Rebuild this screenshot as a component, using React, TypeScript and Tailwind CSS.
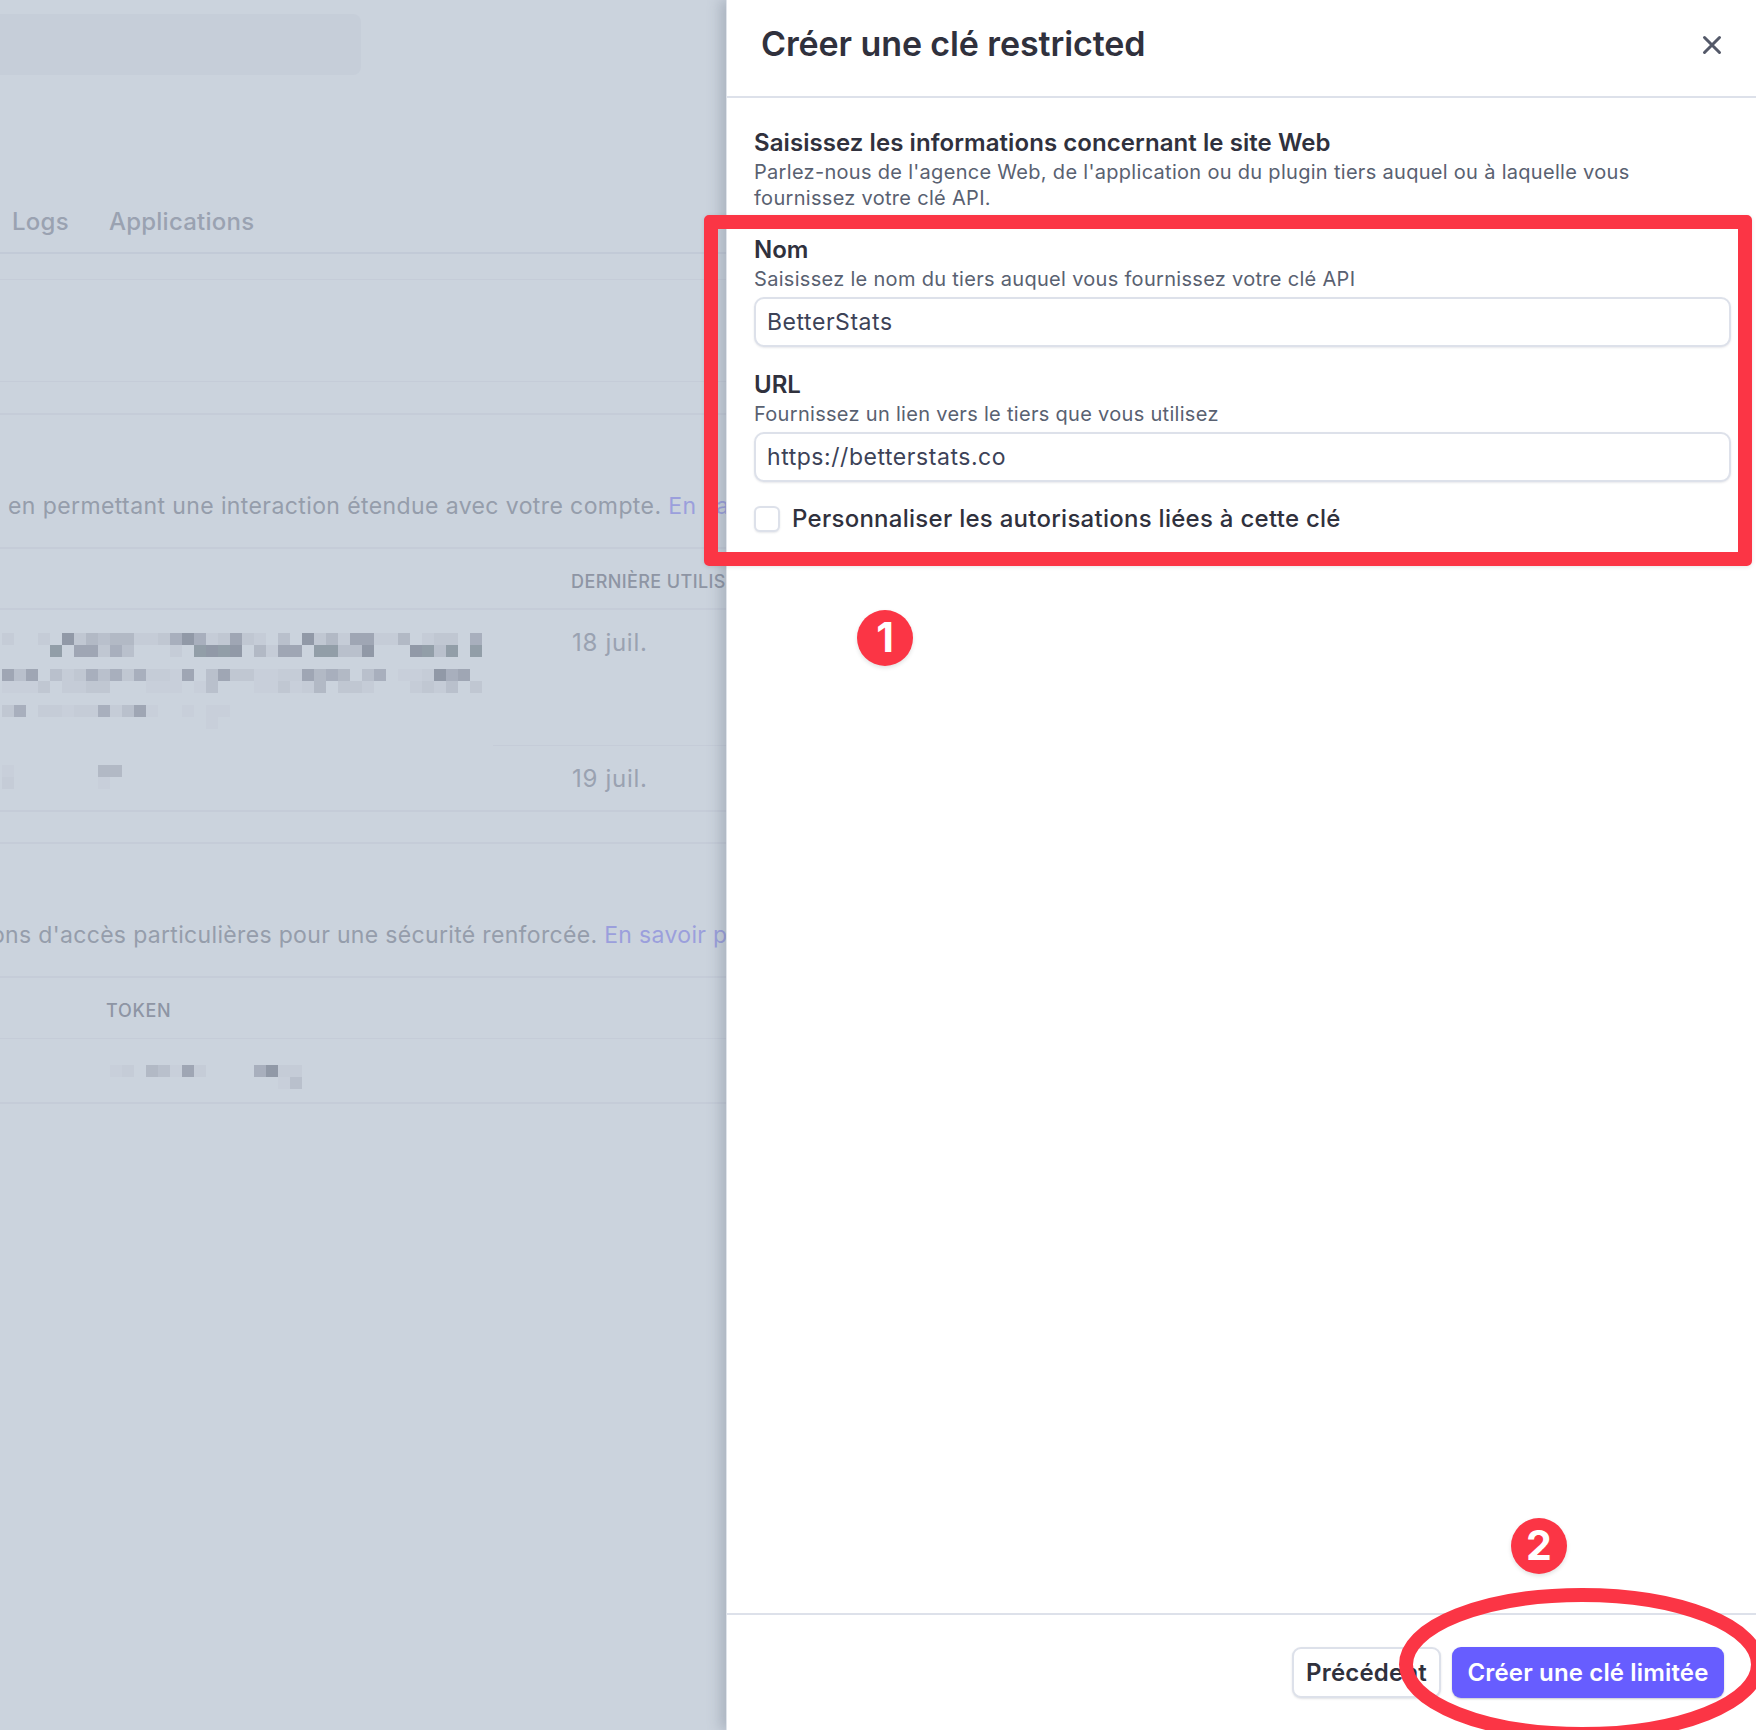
import React from "react";

const shades: Record<string, string> = {
  ".": "",
  "0": "bg-[#c8cfda]",
  "1": "bg-[#c5ccd7]",
  "2": "bg-[#c0c7d2]",
  "3": "bg-[#b9c0cc]",
  "4": "bg-[#b2b9c5]",
  "5": "bg-[#a8afbd]",
  "6": "bg-[#9fa6b4]",
  "7": "bg-[#9199a7]",
  "8": "bg-[#929ea8]",
};

const keyRows = [
  "1..1.72434411257512621.3.724166114.122.5",
  "....8.66253...1.8787.4166.88337...7838.8",
  "",
  "636.312535251106.362200116454.35.001756.",
  "0002.1122...000.03...002014.221...1213.2",
  "",
  "25.1101151360..0.00",
  ".................0",
];

const Mosaic: React.FC<{ rows: string[] }> = ({ rows }) => (
  <div className="grid grid-cols-[repeat(40,12px)] auto-rows-[12px] ml-[2px]">
    {rows.map((row, r) =>
      row
        .padEnd(40, ".")
        .split("")
        .map((c, i) => <span key={`${r}-${i}`} className={shades[c]} />)
    )}
  </div>
);

const Field: React.FC<{ label: string; hint: string; value: string }> = ({ label, hint, value }) => (
  <div className="flex flex-col">
    <label className="text-[24px] leading-[28px] font-semibold text-[#30313d]">{label}</label>
    <span className="text-[20px] leading-[26px] tracking-[0.3px] text-[#596171] mt-[2px]">{hint}</span>
    <input
      readOnly
      value={value}
      className="mt-[5px] h-[50px] w-full rounded-[10px] border-2 border-[#dde1ea] bg-white px-[11px] text-[23px] tracking-[0.55px] text-[#3c4257] outline-none shadow-[0_1px_2px_rgba(60,66,87,0.12)]"
    />
  </div>
);

export default function App() {
  return (
    <div className="relative flex h-[1730px] w-[1756px] overflow-hidden bg-[#cbd3dd] font-['Inter',sans-serif]">
      {/* page behind the drawer */}
      <div className="w-[726px] shrink-0 overflow-hidden text-[#959dab]">
        <div className="h-[254px] border-b-2 border-[#c2cad7] flex flex-col">
          <div className="mt-[14px] h-[61px] w-[361px] rounded-r-[8px] bg-[#c6ced9]" />
          <div className="mt-[132px] flex gap-[40px] pl-[12px] text-[24px] leading-[30px] font-medium tracking-[0.25px] text-[#9aa2b1]">
            <span>Logs</span>
            <span>Applications</span>
          </div>
        </div>
        <div className="h-[26px] border-b border-[#c5ccd8]" />
        <div className="h-[102px] border-b border-[#c5ccd8]" />
        <div className="h-[33px] border-b-2 border-[#c5ccd8]" />
        <div className="h-[134px] border-b-2 border-[#c5ccd8] pt-[76px] pl-[8px] text-[23px] leading-[30px] tracking-[0.4px] whitespace-nowrap">
          en permettant une interaction étendue avec votre compte. <span className="text-[#9b9fdc]">En savoir plus</span>
        </div>
        <div className="h-[61px] border-b-2 border-[#c5ccd8] pt-[21px] pl-[571px] text-[18px] leading-[24px] font-medium tracking-[0.4px] text-[#8e95a4] whitespace-nowrap">
          DERNIÈRE UTILISATION
        </div>
        <div className="flex h-[136px]">
          <div className="w-[493px] shrink-0 pt-[23px]">
            <Mosaic rows={keyRows} />
          </div>
          <div className="grow border-b border-[#c5ccd8] pt-[18px] pl-[79px] text-[24px] leading-[30px] tracking-[0.7px] text-[#9aa2b1]">18 juil.</div>
        </div>
        <div className="flex h-[66px] border-b-2 border-[#c5ccd8]">
          <div className="w-[493px] shrink-0 pt-[19px]">
            <Mosaic rows={["0.......44", "1.......0"]} />
          </div>
          <div className="pt-[18px] pl-[79px] text-[24px] leading-[30px] tracking-[0.7px] text-[#9aa2b1]">19 juil.</div>
        </div>
        <div className="h-[32px] border-b-2 border-[#c5ccd8]" />
        <div className="h-[134px] border-b-2 border-[#c5ccd8] pt-[76px] text-[23px] leading-[30px] tracking-[0.33px] whitespace-nowrap">
          <span className="-ml-[9px]">ons d'accès particulières pour une sécurité renforcée. </span>
          <span className="text-[#9b9fdc]">En savoir plus</span>
        </div>
        <div className="h-[61px] border-b border-[#c5ccd8] pt-[21px] pl-[106px] text-[18px] leading-[24px] font-medium tracking-[0.7px] text-[#8e95a4]">
          TOKEN
        </div>
        <div className="h-[65px] border-b-2 border-[#c5ccd8] pt-[26px]">
          <Mosaic rows={[".........01.43061....5711", ".......................03"]} />
        </div>
      </div>

      {/* drawer */}
      <div className="z-10 flex w-[1030px] shrink-0 flex-col border-l border-[#dfe3ea] bg-white shadow-[-6px_0_12px_rgba(90,100,120,0.28)]">
        <div className="flex h-[98px] shrink-0 items-start justify-between border-b-2 border-[#dde1ea] pl-[34px] pr-[34px]">
          <h1 className="mt-[23px] text-[34px] leading-[42px] font-semibold tracking-[-0.1px] text-[#30313d]">Créer une clé restricted</h1>
          <svg className="mt-[35px] h-[20px] w-[20px]" viewBox="0 0 20 20" fill="none" stroke="#545969" strokeWidth="3" strokeLinecap="round">
            <path d="M2.5 2.5 17.5 17.5M17.5 2.5 2.5 17.5" />
          </svg>
        </div>

        <div className="flex grow flex-col pl-[27px] pr-[25px] pt-[31px]">
          <h2 className="text-[24px] leading-[28px] font-semibold tracking-[0.07px] text-[#30313d]">Saisissez les informations concernant le site Web</h2>
          <p className="text-[20px] leading-[26px] tracking-[0.3px] text-[#596171] mt-[2px] max-w-[900px]">
            Parlez-nous de l'agence Web, de l'application ou du plugin tiers auquel ou à laquelle vous fournissez votre clé API.
          </p>
          <div className="mt-[25px] flex flex-col gap-[24px]">
            <Field label="Nom" hint="Saisissez le nom du tiers auquel vous fournissez votre clé API" value="BetterStats" />
            <Field label="URL" hint="Fournissez un lien vers le tiers que vous utilisez" value="https://betterstats.co" />
          </div>
          <label className="mt-[23px] flex items-center gap-[12px]">
            <input
              type="checkbox"
              className="h-[26px] w-[26px] appearance-none rounded-[6px] border-2 border-[#dde1ea] bg-white shadow-[0_1px_2px_rgba(60,66,87,0.12)]"
            />
            <span className="text-[24px] leading-[28px] font-medium tracking-[0.27px] text-[#30313d]">Personnaliser les autorisations liées à cette clé</span>
          </label>
        </div>

        <div className="flex h-[117px] shrink-0 items-start justify-end gap-[11px] border-t-2 border-[#dde1ea] pr-[32px] pt-[32px]">
          <button className="h-[51px] w-[149px] rounded-[9px] border-2 border-[#dde1ea] bg-white text-[24px] font-semibold tracking-[0.2px] text-[#30313d] shadow-[0_1px_2px_rgba(60,66,87,0.15)]">
            Précédent
          </button>
          <button className="h-[51px] w-[272px] rounded-[9px] bg-[#675dff] text-[24px] font-semibold tracking-[0.15px] text-white shadow-[0_1px_2px_rgba(60,66,87,0.3)]">
            Créer une clé limitée
          </button>
        </div>
      </div>

      {/* red annotations */}
      <div className="absolute left-[704px] top-[215px] z-20 h-[351px] w-[1048px] rounded-[5px] border-[14px] border-[#fb3545] shadow-[0_1px_4px_rgba(0,0,0,0.1)]" />
      <div className="absolute left-[857px] top-[610px] z-20 flex h-[56px] w-[56px] items-center justify-center rounded-full bg-[#fb3545] text-[41px] font-bold text-white shadow-[0_2px_4px_rgba(0,0,0,0.12)]">
        1
      </div>
      <div className="absolute left-[1511px] top-[1518px] z-20 flex h-[56px] w-[56px] items-center justify-center rounded-full bg-[#fb3545] text-[41px] font-bold text-white shadow-[0_2px_4px_rgba(0,0,0,0.12)]">
        2
      </div>
      <svg className="absolute left-[1380px] top-[1570px] z-20 h-[160px] w-[376px]" viewBox="0 0 376 160" fill="none">
        <ellipse cx="202" cy="94.5" rx="176" ry="69.5" stroke="#fb3545" strokeWidth="14" />
      </svg>
    </div>
  );
}
